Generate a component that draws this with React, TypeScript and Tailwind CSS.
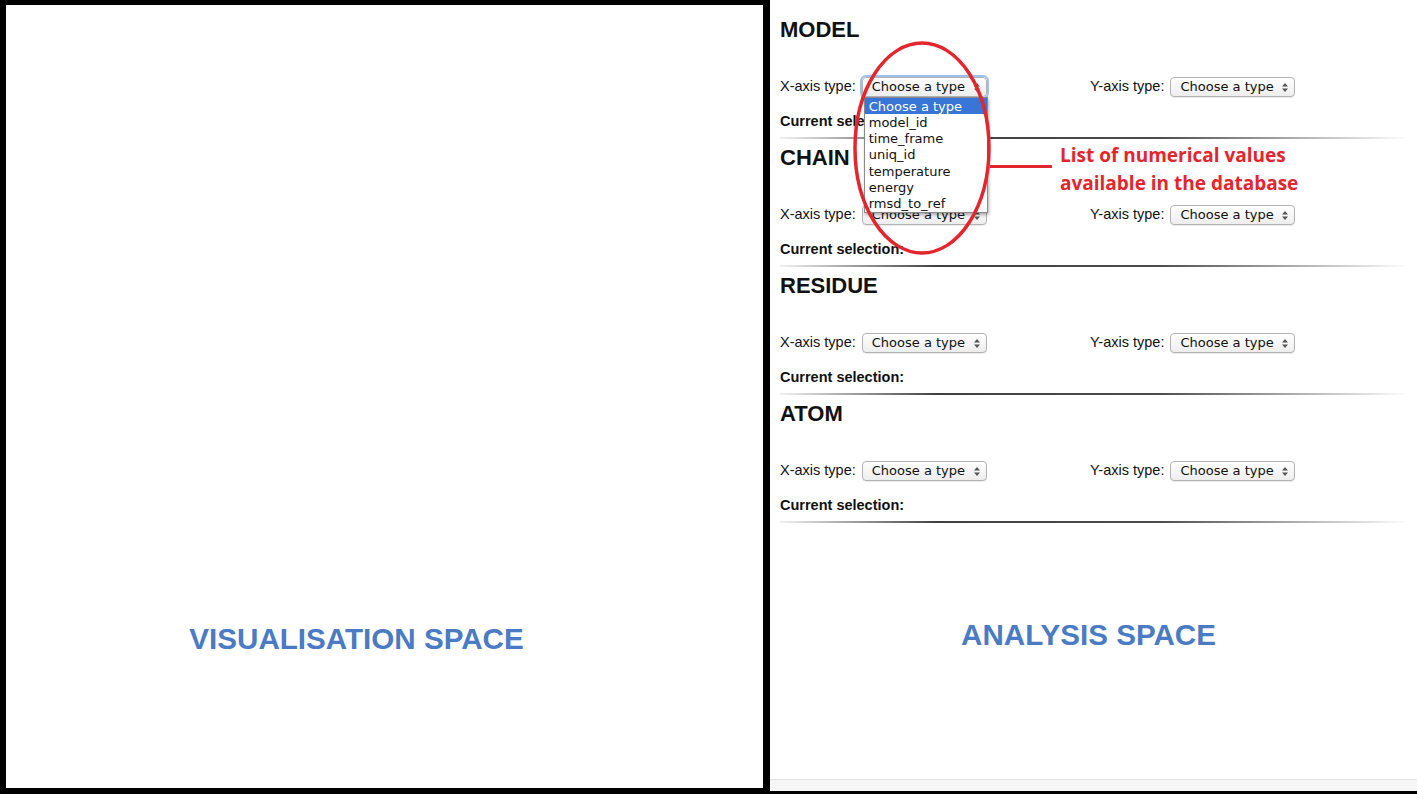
import React from "react";

const SelectBox = ({ focused = false }: { focused?: boolean }) => (
  <div
    className={
      "relative flex h-[20px] w-[125px] items-center rounded-[4px] border border-[#b3b3b3] bg-[linear-gradient(to_bottom,#ffffff,#ededed)] pl-[9px] text-[13px] leading-none text-[#111] [font-family:'DejaVu_Sans',sans-serif] " +
      (focused ? "shadow-[0_0_0_2px_#9ec0ee]" : "shadow-[0_1px_0_rgba(0,0,0,0.08)]")
    }
  >
    <span>Choose a type</span>
    <svg className="absolute right-[6px] top-[5px]" width="6" height="9" viewBox="0 0 6 9">
      <path d="M3 0 L6 3.5 L0 3.5 Z" fill="#555" />
      <path d="M3 9 L6 5.5 L0 5.5 Z" fill="#555" />
    </svg>
  </div>
);

const Dropdown = () => {
  const items = ["Choose a type", "model_id", "time_frame", "uniq_id", "temperature", "energy", "rmsd_to_ref"];
  return (
    <div className="absolute left-[2px] top-[20px] z-10 w-[124px] border border-[#8a8a8a] bg-white text-[13px] text-[#111] shadow-[1px_2px_3px_rgba(0,0,0,0.3)] [font-family:'DejaVu_Sans',sans-serif]">
      {items.map((it, i) => (
        <div
          key={it}
          className={
            "flex h-[16.3px] items-center pl-[4px] leading-none " +
            (i === 0 ? "bg-[#3875d7] text-white" : "")
          }
        >
          {it}
        </div>
      ))}
    </div>
  );
};

const Section = ({ title, open = false }: { title: string; open?: boolean }) => (
  <div className="flex h-[128px] flex-col">
    <div className="h-[24px] text-[22px] font-bold leading-[24px] text-[#111]">{title}</div>
    <div className="mt-[34px] grid h-[20px] grid-cols-[310px_1fr] items-center text-[14.5px] text-[#111]">
      <div className="flex items-center gap-[6px]">
        <span>X-axis type:</span>
        <div className="relative">
          <SelectBox focused={open} />
          {open && <Dropdown />}
        </div>
      </div>
      <div className="flex items-center gap-[6px]">
        <span>Y-axis type:</span>
        <SelectBox />
      </div>
    </div>
    <div className="mt-[17px] h-[16px] text-[14.5px] font-bold leading-[16px] text-[#111]">Current selection:</div>
    <div className="mt-[8px] h-[2px] w-[630px] bg-[linear-gradient(to_right,rgba(0,0,0,0.05),rgba(0,0,0,0.75)_25%,rgba(0,0,0,0.7)_60%,rgba(0,0,0,0))]" />
  </div>
);

export default function App() {
  return (
    <div className="flex h-[794px] w-[1417px] overflow-hidden bg-black [font-family:'Liberation_Sans',Arial,sans-serif]">
      {/* Left panel */}
      <div className="ml-[6px] mt-[5px] mb-[6px] flex w-[757px] items-start bg-white">
        <div className="mt-[617px] w-full pr-[56px] text-center text-[29.6px] font-bold leading-[34px] text-[#4a7bc4]">
          VISUALISATION SPACE
        </div>
      </div>

      {/* Right panel */}
      <div className="relative ml-[7px] mb-[3px] flex flex-1 flex-col bg-white">
        <div className="flex flex-1 flex-col pl-[10px] pt-[18px]">
          <Section title="MODEL" open />
          <Section title="CHAIN" />
          <Section title="RESIDUE" />
          <Section title="ATOM" />
          <div className="mt-[88px] pr-[20px] text-center text-[29.6px] font-bold leading-[34px] text-[#4a7bc4]">
            ANALYSIS SPACE
          </div>
        </div>
        <div className="h-[12px] border-t border-[#e2e2e2] bg-[#f6f6f6]" />

        {/* Annotation overlay */}
        <svg className="pointer-events-none absolute left-[77px] top-[36px] z-20" width="150" height="224" viewBox="0 0 150 224">
          <ellipse cx="75" cy="112" rx="67" ry="105" fill="none" stroke="#e3262d" strokeWidth="3.5" />
        </svg>
        <div className="absolute left-[220px] top-[165px] z-20 h-[3px] w-[62px] bg-[#e3262d]" />
        <div className="absolute left-[290px] top-[141px] z-20 text-[19px] font-bold leading-[28px] text-[#e3262d] [font-family:'Open_Sans',sans-serif]">
          <div>List of numerical values</div>
          <div>available in the database</div>
        </div>
      </div>
    </div>
  );
}
